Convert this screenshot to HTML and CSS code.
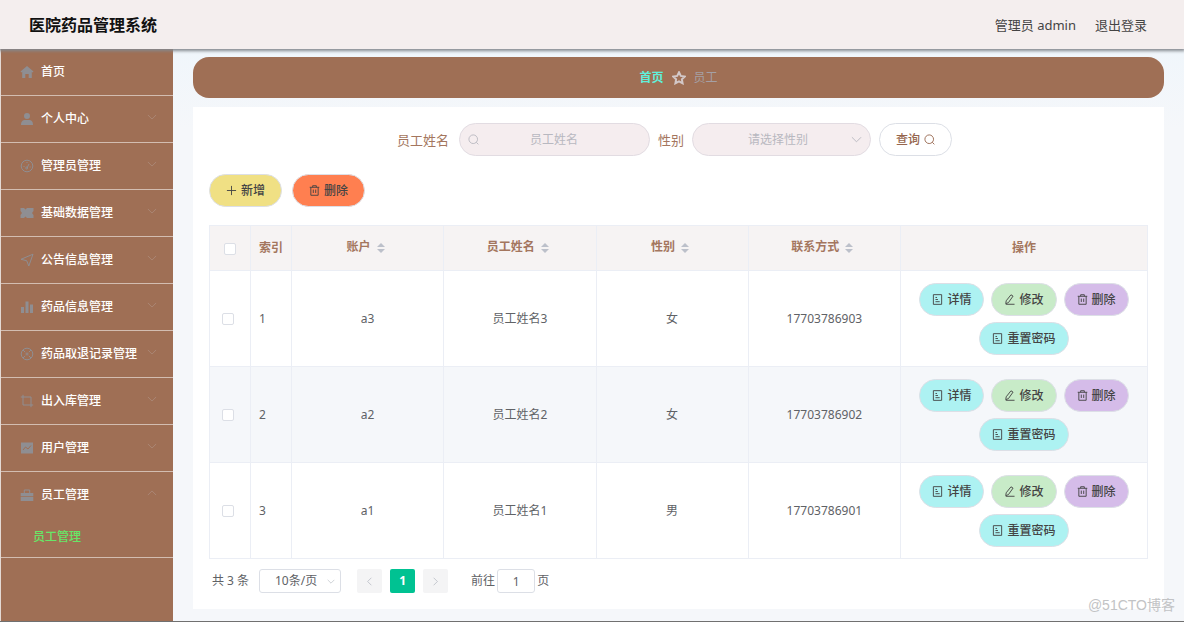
FILE: index.html
```html
<!DOCTYPE html>
<html lang="zh-CN">
<head>
<meta charset="utf-8">
<meta name="viewport" content="width=device-width, initial-scale=1">
<title>医院药品管理系统</title>
<link rel="stylesheet" href="styles.css">
</head>
<body>
<svg class="sprite" aria-hidden="true">
  <symbol id="i-down" viewBox="0 0 12 12"><path d="M1 3.5l5 5 5-5"/></symbol>
  <symbol id="i-search" viewBox="0 0 12 12"><circle cx="5.7" cy="5.7" r="4.7"/><path d="M9 9l2.3 2.3"/></symbol>
  <symbol id="i-plus" viewBox="0 0 12 12"><path d="M6 1v10M1 6h10"/></symbol>
  <symbol id="i-trash" viewBox="0 0 12 12"><path d="M.8 2.5h10.4M4 2.5V.8h4v1.700M2 2.500v8.700h8V2.500M4.700 5v3.700M7.300 5v3.700"/></symbol>
  <symbol id="i-doc" viewBox="0 0 12 12"><path d="M1.500.700h9v10.600h-9zM3.800 3.800h1.700M3.800 6h2.700M3.800 8.400h4.600"/></symbol>
  <symbol id="i-edit" viewBox="0 0 12 12"><path d="M7.600.900l2.300 1.400-5 7-3 1.300.500-3.200zM2 11.200h9.500"/></symbol>
  <symbol id="i-sort" viewBox="0 0 8 12"><path d="M4 1l4 4H0zM4 11l4-4H0z"/></symbol>
</svg>
<div class="page">
  <header class="header">
    <h1 class="title">医院药品管理系统</h1>
    <div class="account"><span>管理员 admin</span><a href="#">退出登录</a></div>
  </header>
  <div class="body">
    <nav class="sidebar">
      <ul class="menu">
        <li><a class="item" href="#"><svg class="mi" viewBox="0 0 14 14"><path class="solid" d="M7 1l6.500 5.600-.800.900-.900-.700V13H8.700V9H5.300v4H2.200V6.800l-.900.700-.800-.900z"/></svg>首页</a></li>
        <li><a class="item" href="#"><svg class="mi" viewBox="0 0 14 14"><circle class="solid" cx="7" cy="4" r="3"/><path class="solid" d="M1 13c0-4 2-5 4-5h4c2 0 4 1 4 5z"/></svg>个人中心<svg class="arrow"><use href="#i-down"/></svg></a></li>
        <li><a class="item" href="#"><svg class="mi" viewBox="0 0 14 14"><circle cx="7" cy="7" r="5.800"/><path d="M7 9l2-4M3.500 7.500h1M7 3v1M9.700 8h1"/><circle cx="6.700" cy="9" r="1"/></svg>管理员管理<svg class="arrow"><use href="#i-down"/></svg></a></li>
        <li><a class="item" href="#"><svg class="mi" viewBox="0 0 14 14"><path class="solid" d="M.500 2h3.500l1.500 1.500L7 2h6.500v3L12 7l1.500 2v3H7l-1.500-1.500L4 12H.500V9L2 7 .500 5z"/></svg>基础数据管理<svg class="arrow"><use href="#i-down"/></svg></a></li>
        <li><a class="item" href="#"><svg class="mi" viewBox="0 0 14 14"><path d="M1 6.300L13 1.200 8.800 13 6.700 7.700z"/></svg>公告信息管理<svg class="arrow"><use href="#i-down"/></svg></a></li>
        <li><a class="item" href="#"><svg class="mi" viewBox="0 0 14 14"><path class="solid" d="M1 7h3v6H1zM5.500 1.500h3V13h-3zM10 4.500h3V13h-3z"/></svg>药品信息管理<svg class="arrow"><use href="#i-down"/></svg></a></li>
        <li><a class="item" href="#"><svg class="mi" viewBox="0 0 14 14"><circle cx="7" cy="7" r="5.800"/><circle cx="7" cy="7" r="1"/><path d="M3 3l2.200 2.200M8.800 8.800L11 11M3 11l2.200-2.200M8.800 5.200L11 3"/></svg>药品取退记录管理<svg class="arrow"><use href="#i-down"/></svg></a></li>
        <li><a class="item" href="#"><svg class="mi" viewBox="0 0 14 14"><path d="M3 .800V11h10.200M.800 3H11v10.200"/></svg>出入库管理<svg class="arrow"><use href="#i-down"/></svg></a></li>
        <li><a class="item" href="#"><svg class="mi" viewBox="0 0 14 14"><path class="solid" d="M1 1.500h12v11H1z"/><path class="cut" d="M3 9l2.500-3L8 8l3-3.500"/></svg>用户管理<svg class="arrow"><use href="#i-down"/></svg></a></li>
        <li><a class="item" href="#"><svg class="mi" viewBox="0 0 14 14"><path class="solid" d="M.700 5h12.600v3H.700zM.700 8.700h12.600V13H.700z"/><path d="M4.300 5V2h5.400v3"/></svg>员工管理<svg class="arrow up"><use href="#i-down"/></svg></a>
          <a class="subitem" href="#">员工管理</a></li>
      </ul>
    </nav>
    <main class="main">
      <div class="crumbs"><a href="#">首页</a><svg class="star" viewBox="0 0 14 14"><path d="M7 1.300l1.800 3.600 4 .600-2.900 2.800.700 4L7 10.400l-3.600 1.900.700-4L1.200 5.500l4-.600z"/></svg><span>员工</span></div>
      <section class="panel">
        <form class="search">
          <label class="label first" for="name">员工姓名</label>
          <div class="field name"><svg class="ic"><use href="#i-search"/></svg><input id="name" type="text" placeholder="员工姓名"></div>
          <label class="label" for="sex">性别</label>
          <div class="field sex"><select id="sex"><option>请选择性别</option><option>男</option><option>女</option></select><svg class="ic"><use href="#i-down"/></svg></div>
          <button class="btn query" type="button">查询<svg class="ic"><use href="#i-search"/></svg></button>
        </form>
        <div class="tools">
          <button class="btn wide add" type="button"><svg class="ic"><use href="#i-plus"/></svg>新增</button>
          <button class="btn wide remove" type="button"><svg class="ic"><use href="#i-trash"/></svg>删除</button>
        </div>
        <table class="table">
          <colgroup><col class="c-narrow"><col class="c-narrow"><col><col><col><col><col class="c-ops"></colgroup>
          <thead><tr>
            <th><input class="check" type="checkbox" aria-label="全选"></th><th class="index">索引</th>
            <th class="sortable">账户<svg class="sort"><use href="#i-sort"/></svg></th>
            <th class="sortable">员工姓名<svg class="sort"><use href="#i-sort"/></svg></th>
            <th class="sortable">性别<svg class="sort"><use href="#i-sort"/></svg></th>
            <th class="sortable">联系方式<svg class="sort"><use href="#i-sort"/></svg></th>
            <th>操作</th>
          </tr></thead>
          <tbody>
            <tr><td class="pick"><input class="check" type="checkbox" aria-label="选择 a3"></td><td class="index">1</td><td>a3</td><td>员工姓名3</td><td>女</td><td>17703786903</td>
              <td><div class="ops"><button class="btn detail" type="button"><svg class="ic"><use href="#i-doc"/></svg>详情</button><button class="btn edit" type="button"><svg class="ic"><use href="#i-edit"/></svg>修改</button><button class="btn del" type="button"><svg class="ic"><use href="#i-trash"/></svg>删除</button><button class="btn detail" type="button"><svg class="ic"><use href="#i-doc"/></svg>重置密码</button></div></td></tr>
            <tr><td class="pick"><input class="check" type="checkbox" aria-label="选择 a2"></td><td class="index">2</td><td>a2</td><td>员工姓名2</td><td>女</td><td>17703786902</td>
              <td><div class="ops"><button class="btn detail" type="button"><svg class="ic"><use href="#i-doc"/></svg>详情</button><button class="btn edit" type="button"><svg class="ic"><use href="#i-edit"/></svg>修改</button><button class="btn del" type="button"><svg class="ic"><use href="#i-trash"/></svg>删除</button><button class="btn detail" type="button"><svg class="ic"><use href="#i-doc"/></svg>重置密码</button></div></td></tr>
            <tr><td class="pick"><input class="check" type="checkbox" aria-label="选择 a1"></td><td class="index">3</td><td>a1</td><td>员工姓名1</td><td>男</td><td>17703786901</td>
              <td><div class="ops"><button class="btn detail" type="button"><svg class="ic"><use href="#i-doc"/></svg>详情</button><button class="btn edit" type="button"><svg class="ic"><use href="#i-edit"/></svg>修改</button><button class="btn del" type="button"><svg class="ic"><use href="#i-trash"/></svg>删除</button><button class="btn detail" type="button"><svg class="ic"><use href="#i-doc"/></svg>重置密码</button></div></td></tr>
          </tbody>
        </table>
        <div class="pager">
          <span>共 3 条</span>
          <div class="size"><select aria-label="每页条数"><option>10条/页</option></select><svg class="ic"><use href="#i-down"/></svg></div>
          <div class="pages">
            <button class="pg" type="button" aria-label="上一页" disabled><svg class="ic prev"><use href="#i-down"/></svg></button>
            <button class="pg current" type="button">1</button>
            <button class="pg" type="button" aria-label="下一页" disabled><svg class="ic next"><use href="#i-down"/></svg></button>
          </div>
          <div class="jump"><label for="jump">前往</label><input id="jump" type="text" value="1"><span>页</span></div>
        </div>
      </section>
    </main>
  </div>
  <div class="watermark">@51CTO博客</div>
</div>
</body>
</html>
```
FILE: styles.css
```css
* { box-sizing: border-box; }
body {
  margin: 0;
  font-family: "Noto Sans", "Noto Sans CJK SC", sans-serif;
  font-size: 12px;
  line-height: 16px;
  color: #606266;
}
a { color: inherit; text-decoration: none; }
button, input, select { font: inherit; color: inherit; margin: 0; }
svg { fill: none; stroke: currentColor; flex: none; }
.sprite { position: absolute; width: 0; height: 0; }
.page {
  position: relative;
  display: flex;
  flex-direction: column;
  min-height: 100vh;
  background: #f5f7fa;
  border-bottom: 1px solid #707070;
}
.header {
  position: relative;
  display: flex;
  align-items: center;
  justify-content: space-between;
  height: 49px;
  padding: 0 37px 0 29px;
  background: #f4eeee;
  box-shadow: 0 1px 3px 1px #84888e;
}
.title { margin: 0; font-size: 16px; line-height: 24px; color: #111; }
.account { display: flex; gap: 19px; font-size: 13px; color: #444; }
.body { display: flex; flex: 1; }

.sidebar { width: 173px; flex: none; border-left: 1px solid #e4d9d4; background: #9f6f55; }
.menu { margin: 0; padding: 0; list-style: none; }
.menu li { border-bottom: 1px solid #d3bdb1; }
.item {
  display: flex;
  align-items: center;
  gap: 7px;
  height: 46px;
  padding: 0 16px 0 19px;
  color: #fff;
  font-weight: 500;
}
.mi { width: 14px; height: 14px; color: #8f8e92; }
.solid { fill: currentColor; stroke: none; }
.cut { stroke: #9f6f55; }
.arrow { width: 10px; height: 12px; margin: 0 0 4px auto; color: #ac8a7b; }
.up { transform: rotate(180deg); }
.subitem { display: block; padding: 11px 0 12px 32px; color: #67e667; font-weight: 500; }

.main { flex: 1; min-width: 0; padding: 8px 20px 12px; background: linear-gradient(#f0f6fb, #f5f7fa 80px); }
.crumbs {
  display: flex;
  align-items: center;
  justify-content: center;
  gap: 8px;
  height: 41px;
  margin-bottom: 9px;
  border-radius: 16px;
  background: #9f6f55;
  color: #a5a0a5;
}
.crumbs a { color: #5ff0dc; font-weight: 700; }
.star { width: 14px; height: 14px; color: #d3c8c8; stroke-width: 2; }
.panel { padding: 16px; background: #fff; }

.search { display: flex; justify-content: center; align-items: center; gap: 8px; padding-right: 8px; }
.label { color: #a4765e; font-size: 13px; }
.first { margin-right: 2px; }
.field {
  display: flex;
  align-items: center;
  height: 33px;
  border: 1px solid #e2dce2;
  border-radius: 17px;
  background: #f5edef;
  color: #b8b8c0;
}
.field input, .field select {
  flex: 1;
  min-width: 0;
  height: 100%;
  border: 0;
  outline: 0;
  background: none;
  text-align: center;
  text-align-last: center;
  appearance: none;
}
.field input::placeholder { color: #b8b8c0; }
.name { width: 191px; padding: 0 8px; }
.sex { width: 179px; padding: 0 8px; }
.name input { padding: 0 12px 0 0; }
.sex select { padding: 0 0 0 4px; }
.ic { width: 11px; height: 11px; }
.tools { display: flex; gap: 10px; margin: 18px 0; }
.btn {
  display: inline-flex;
  align-items: center;
  justify-content: center;
  gap: 4px;
  height: 33px;
  padding: 0 12px;
  border: 1px solid #dcdfe6;
  border-radius: 17px;
  color: #444;
  font-weight: 500;
  white-space: nowrap;
}
.wide, .query { padding: 0 16px; }
.query { background: #fff; color: #96664d; }
.add { background: #f0e084; }
.remove { background: #ff7f50; }
.detail { background: #adf2f2; }
.edit { background: #c8ebc8; }
.del { background: #d5bce9; }

.table {
  width: 100%;
  table-layout: fixed;
  border-collapse: separate;
  border-spacing: 0;
  border: solid #ebeef5;
  border-width: 1px 0 0 1px;
}
.c-narrow { width: 41px; }
.c-ops { width: 247px; }
.table th, .table td {
  padding: 0;
  border: solid #ebeef5;
  border-width: 0 1px 1px 0;
  text-align: center;
  vertical-align: middle;
}
.table th { height: 45px; background: #f6f3f3; color: #a4765e; font-weight: 700; }
.table .sortable { padding: 0 4px 2px 0; }
.table .index { padding-left: 8px; text-align: left; }
.table .pick { padding-right: 4px; }
.table tbody tr:nth-child(2) { background: #f5f7fa; }
.sort { width: 8px; height: 12px; margin-left: 6px; vertical-align: middle; fill: #bcc0ca; stroke: none; }
.check {
  width: 12px;
  height: 12px;
  border: 1px solid #dcdfe6;
  border-radius: 2px;
  background: #fff;
  appearance: none;
  vertical-align: middle;
}
.ops { display: flex; flex-wrap: wrap; justify-content: center; gap: 6px 7px; padding: 12px 10px 11px; }

.pager { display: flex; align-items: center; height: 24px; margin-top: 10px; padding-left: 3px; }
.size {
  display: flex;
  align-items: center;
  width: 82px;
  height: 24px;
  margin: 0 16px 0 10px;
  padding: 0 5px;
  border: 1px solid #dcdfe6;
  border-radius: 3px;
}
.size select {
  flex: 1;
  min-width: 0;
  padding: 0;
  border: 0;
  background: none;
  text-align-last: center;
  appearance: none;
}
.size .ic { width: 8px; color: #b8bcc4; }
.pages { display: flex; gap: 8px; margin-right: 23px; }
.pg {
  display: flex;
  align-items: center;
  justify-content: center;
  width: 25px;
  height: 24px;
  padding: 0;
  border: 0;
  border-radius: 2px;
  background: #f4f4f5;
  color: #b4b8c0;
}
.pg.current { background: #00c292; color: #fff; font-weight: 700; }
.prev { width: 9px; transform: rotate(90deg); }
.next { width: 9px; transform: rotate(-90deg); }
.jump { display: flex; align-items: center; gap: 2px; }
.jump input {
  width: 38px;
  height: 24px;
  padding: 0;
  border: 1px solid #dcdfe6;
  border-radius: 3px;
  background: #fff;
  text-align: center;
}
.watermark {
  position: absolute;
  right: 9px;
  bottom: 8px;
  font-family: "Liberation Sans", "Noto Sans CJK SC", sans-serif;
  font-size: 14px;
  color: #c2c3c5;
}
```
